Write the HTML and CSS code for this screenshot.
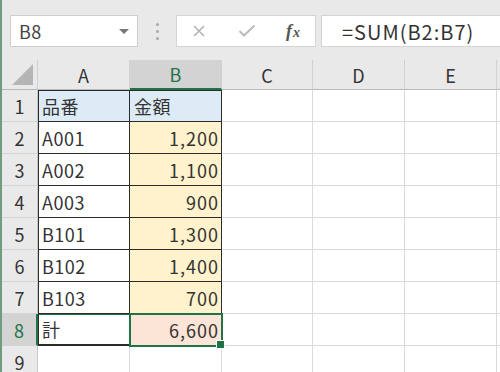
FILE: index.html
```html
<!DOCTYPE html>
<html lang="ja">

<head>
  <meta charset="UTF-8" />
  <title>Book1 - Excel</title>
  <link rel="stylesheet" href="styles.css">
</head>

<body>
  <div class="app">

    <!-- 名前ボックスと数式バー -->
    <div class="toolbar">
      <div class="namebox">
        <span>B8</span>
        <span class="arrow"></span>
      </div>
      <div class="grip">
        <span></span><span></span><span></span>
      </div>
      <div class="fx-buttons">
        <svg class="btn-icon" width="14" height="14" viewBox="0 0 14 14">
          <path d="M2 2 L12 12 M12 2 L2 12" stroke="#b4b4b4" stroke-width="1.6" fill="none" />
        </svg>
        <svg class="btn-icon" width="18" height="14" viewBox="0 0 18 14">
          <path d="M1.5 7 L6 11.5 L16.5 1.5" stroke="#bcbcbc" stroke-width="2" fill="none" />
        </svg>
        <span class="fx"><i>f</i><i class="x">x</i></span>
      </div>
      <div class="formula">=SUM(B2:B7)</div>
    </div>

    <!-- シート -->
    <div class="sheet">
      <div class="corner"><span class="tri"></span></div>
      <div class="colhead">A</div>
      <div class="colhead active">B</div>
      <div class="colhead">C</div>
      <div class="colhead">D</div>
      <div class="colhead">E</div>
      <div class="colhead"></div>

      <div class="rowhead">1</div>
      <div class="cell t head first top">品番</div>
      <div class="cell t head top">金額</div>
      <div class="cell"></div><div class="cell"></div><div class="cell"></div><div class="cell"></div>

      <div class="rowhead">2</div>
      <div class="cell t first">A001</div>
      <div class="cell t amount num">1,200</div>
      <div class="cell"></div><div class="cell"></div><div class="cell"></div><div class="cell"></div>

      <div class="rowhead">3</div>
      <div class="cell t first">A002</div>
      <div class="cell t amount num">1,100</div>
      <div class="cell"></div><div class="cell"></div><div class="cell"></div><div class="cell"></div>

      <div class="rowhead">4</div>
      <div class="cell t first">A003</div>
      <div class="cell t amount num">900</div>
      <div class="cell"></div><div class="cell"></div><div class="cell"></div><div class="cell"></div>

      <div class="rowhead">5</div>
      <div class="cell t first">B101</div>
      <div class="cell t amount num">1,300</div>
      <div class="cell"></div><div class="cell"></div><div class="cell"></div><div class="cell"></div>

      <div class="rowhead">6</div>
      <div class="cell t first">B102</div>
      <div class="cell t amount num">1,400</div>
      <div class="cell"></div><div class="cell"></div><div class="cell"></div><div class="cell"></div>

      <div class="rowhead">7</div>
      <div class="cell t first">B103</div>
      <div class="cell t amount num">700</div>
      <div class="cell"></div><div class="cell"></div><div class="cell"></div><div class="cell"></div>

      <div class="rowhead active">8</div>
      <div class="cell t first total-label">計</div>
      <div class="cell t total num selected">6,600</div>
      <div class="cell"></div><div class="cell"></div><div class="cell"></div><div class="cell"></div>

      <div class="rowhead">9</div>
      <div class="cell"></div>
      <div class="cell"></div>
      <div class="cell"></div><div class="cell"></div><div class="cell"></div><div class="cell"></div>
    </div>

  </div>
</body>

</html>
```

FILE: styles.css
```css
* {
  margin: 0;
  padding: 0;
  box-sizing: border-box;
}

html,
body {
  width: 500px;
  height: 372px;
  overflow: hidden;
  background: #ffffff;
  font-family: "Noto Sans CJK JP", "Noto Sans", sans-serif;
  color: #333;
}

.app {
  height: 372px;
  border-left: 2px solid #6f9c7e; /* ウィンドウの緑の縁 */
  background: #e9e9e9;
}

/* ---------- 数式バー ---------- */

.toolbar {
  height: 60px;
  display: flex;
  align-items: flex-start;
  padding: 15px 0 0 8px;
  background: #e9e9e9;
}

.namebox {
  width: 128px;
  height: 32px;
  background: #fff;
  border: 1px solid #cfcfcf;
  display: flex;
  align-items: center;
  justify-content: space-between;
  padding: 0 8px 0 8px;
  font-size: 18px;
  letter-spacing: 0.5px;
  color: #444;
}

.arrow {
  width: 0;
  height: 0;
  border-left: 5px solid transparent;
  border-right: 5px solid transparent;
  border-top: 5px solid #777;
}

.grip {
  width: 38px;
  height: 32px;
  display: flex;
  flex-direction: column;
  align-items: center;
  justify-content: center;
  gap: 4px;
}

.grip span {
  width: 3px;
  height: 3px;
  border-radius: 50%;
  background: #a8a8a8;
}

.fx-buttons {
  width: 140px;
  height: 32px;
  background: #fff;
  border: 1px solid #d4d4d4;
  display: flex;
  align-items: center;
  padding: 0 0 0 15px;
}

.btn-icon {
  display: block;
}

.btn-icon + .btn-icon {
  margin-left: 32px;
}

.fx {
  margin-left: 30px;
  font-family: "Liberation Serif", serif;
  font-size: 18px;
  color: #555;
  font-weight: bold;
}

.fx .x {
  font-size: 14px;
  margin-left: 1px;
}

.formula {
  flex: 1;
  height: 32px;
  margin-left: 5px;
  background: #fff;
  border: 1px solid #d4d4d4;
  border-right: none;
  display: flex;
  align-items: center;
  padding-left: 20px;
  font-size: 20px;
  letter-spacing: 1px;
  color: #333;
}

/* ---------- シート ---------- */

.sheet {
  display: grid;
  grid-template-columns: 36px 92px 92px 91px 92px 92px 1fr;
  grid-template-rows: 30px repeat(9, 32px);
  background: #fff;
  font-size: 18px;
}

.corner {
  background: #e9e9e9;
  border-right: 1px solid #d0d0d0;
  border-bottom: 1px solid #b8b8b8;
  position: relative;
}

.corner .tri {
  position: absolute;
  right: 4px;
  bottom: 4px;
  width: 0;
  height: 0;
  border-left: 21px solid transparent;
  border-bottom: 21px solid #b5b5b5;
}

.colhead {
  background: #e9e9e9;
  border-right: 1px solid #d0d0d0;
  border-bottom: 1px solid #b8b8b8;
  display: flex;
  align-items: center;
  justify-content: center;
  color: #333;
}

.colhead.active {
  background: #d3d3d3;
  color: #217346;
  border-bottom: 2px solid #217346;
}

.rowhead {
  background: #e9e9e9;
  border-right: 1px solid #c8c8c8;
  border-bottom: 1px solid #d4d4d4;
  display: flex;
  align-items: center;
  justify-content: center;
  color: #333;
}

.rowhead.active {
  background: #d3d3d3;
  color: #217346;
  border-right: 2px solid #217346;
}

.cell {
  border-right: 1px solid #dadada;
  border-bottom: 1px solid #dadada;
  display: flex;
  align-items: center;
  padding: 0 4px;
  white-space: nowrap;
  letter-spacing: 0.5px;
}

/* 表の罫線 */
.cell.t {
  border-right-color: #2b2b2b;
  border-bottom-color: #2b2b2b;
}

.cell.first {
  border-left: 1px solid #2b2b2b;
  padding-left: 3px;
}

.cell.top {
  border-top: 1px solid #2b2b2b;
}

.num {
  justify-content: flex-end;
  padding-right: 2px;
  letter-spacing: 1px;
}

.head {
  background: #ddebf7;
}

.amount {
  background: #fff2cc;
}

.total {
  background: #fce4d6;
}

.total-label {
  border-left: 2px solid #217346;
  border-bottom: 2px solid #217346;
  box-shadow: inset 0 1px 0 #217346;
}

/* 選択中のセル */
.selected {
  position: relative;
  outline: 2px solid #217346;
  outline-offset: -1px;
}

.selected::after {
  content: "";
  position: absolute;
  right: -4px;
  bottom: -4px;
  width: 7px;
  height: 7px;
  background: #217346;
  border: 1px solid #fff;
}
```
